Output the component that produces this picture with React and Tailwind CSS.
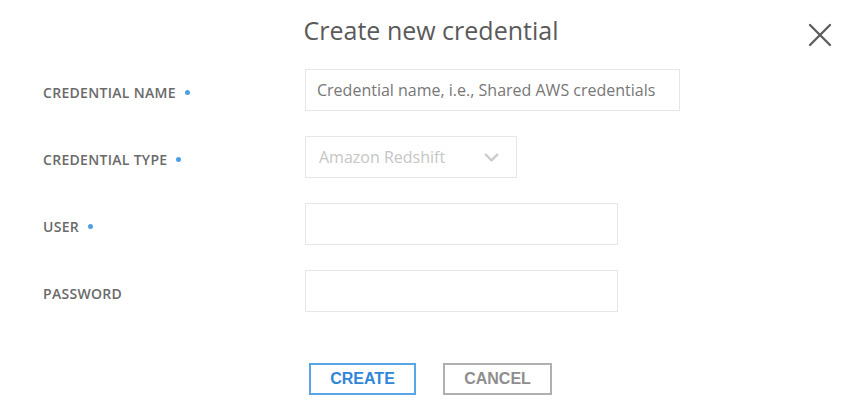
import { X, ChevronDown } from "lucide-react";

const rows = [
  { label: "CREDENTIAL NAME", required: true, kind: "name" },
  { label: "CREDENTIAL TYPE", required: true, kind: "type" },
  { label: "USER", required: true, kind: "text" },
  { label: "PASSWORD", required: false, kind: "password" },
];

const Field = ({ kind }) => {
  if (kind === "name") {
    return (
      <input
        type="text"
        placeholder="Credential name, i.e., Shared AWS credentials"
        className="w-[375px] h-[42px] border border-[#e6e6e6] px-[11px] text-[16px] text-[#555] placeholder:text-[#777777] outline-none"
      />
    );
  }
  if (kind === "type") {
    return (
      <div className="w-[212px] h-[42px] border border-[#e6e6e6] flex items-center justify-between pl-[13px] pr-[13px]">
        <span className="text-[16px] text-[#c6c6c6]">Amazon Redshift</span>
        <ChevronDown size={23} strokeWidth={2.4} className="text-[#cccccc]" />
      </div>
    );
  }
  return (
    <input
      type={kind}
      className="w-[313px] h-[42px] border border-[#e6e6e6] px-[11px] text-[16px] outline-none"
    />
  );
};

export default function App() {
  return (
    <div className="relative w-[865px] h-[405px] bg-white font-['Open_Sans','Lato',sans-serif]">
      <div className="pt-[13px] pr-[3px] text-center text-[25px] leading-[34px] text-[#5a5a5a]">
        Create new credential
      </div>
      <button className="absolute top-[15px] right-[25px] text-[#5c5c5c]">
        <X size={40} strokeWidth={1.4} />
      </button>

      <div className="mt-[22px] flex flex-col gap-[25px]">
        {rows.map((row, i) => (
          <div key={i} className="flex items-center h-[42px]">
            <div className="w-[305px] pl-[43px] pt-[4px] flex items-center text-[14px] font-semibold tracking-[0.3px] text-[#6a6a6a]">
              {row.label}
              {row.required && <span className="ml-[9px] w-[5px] h-[5px] rounded-full bg-[#4d9fe3]"></span>}
            </div>
            <Field kind={row.kind} />
          </div>
        ))}
      </div>

      <div className="mt-[51px] flex justify-center gap-[27px] pr-[4px] font-['Liberation_Sans',Arial,sans-serif]">
        <button className="w-[107px] h-[32px] border-2 border-[#5aa5e6] text-[#2f86d8] text-[16px] font-bold">
          CREATE
        </button>
        <button className="w-[109px] h-[32px] border-2 border-[#b0b0b0] text-[#8e8e8e] text-[16px] font-bold">
          CANCEL
        </button>
      </div>
    </div>
  );
}
